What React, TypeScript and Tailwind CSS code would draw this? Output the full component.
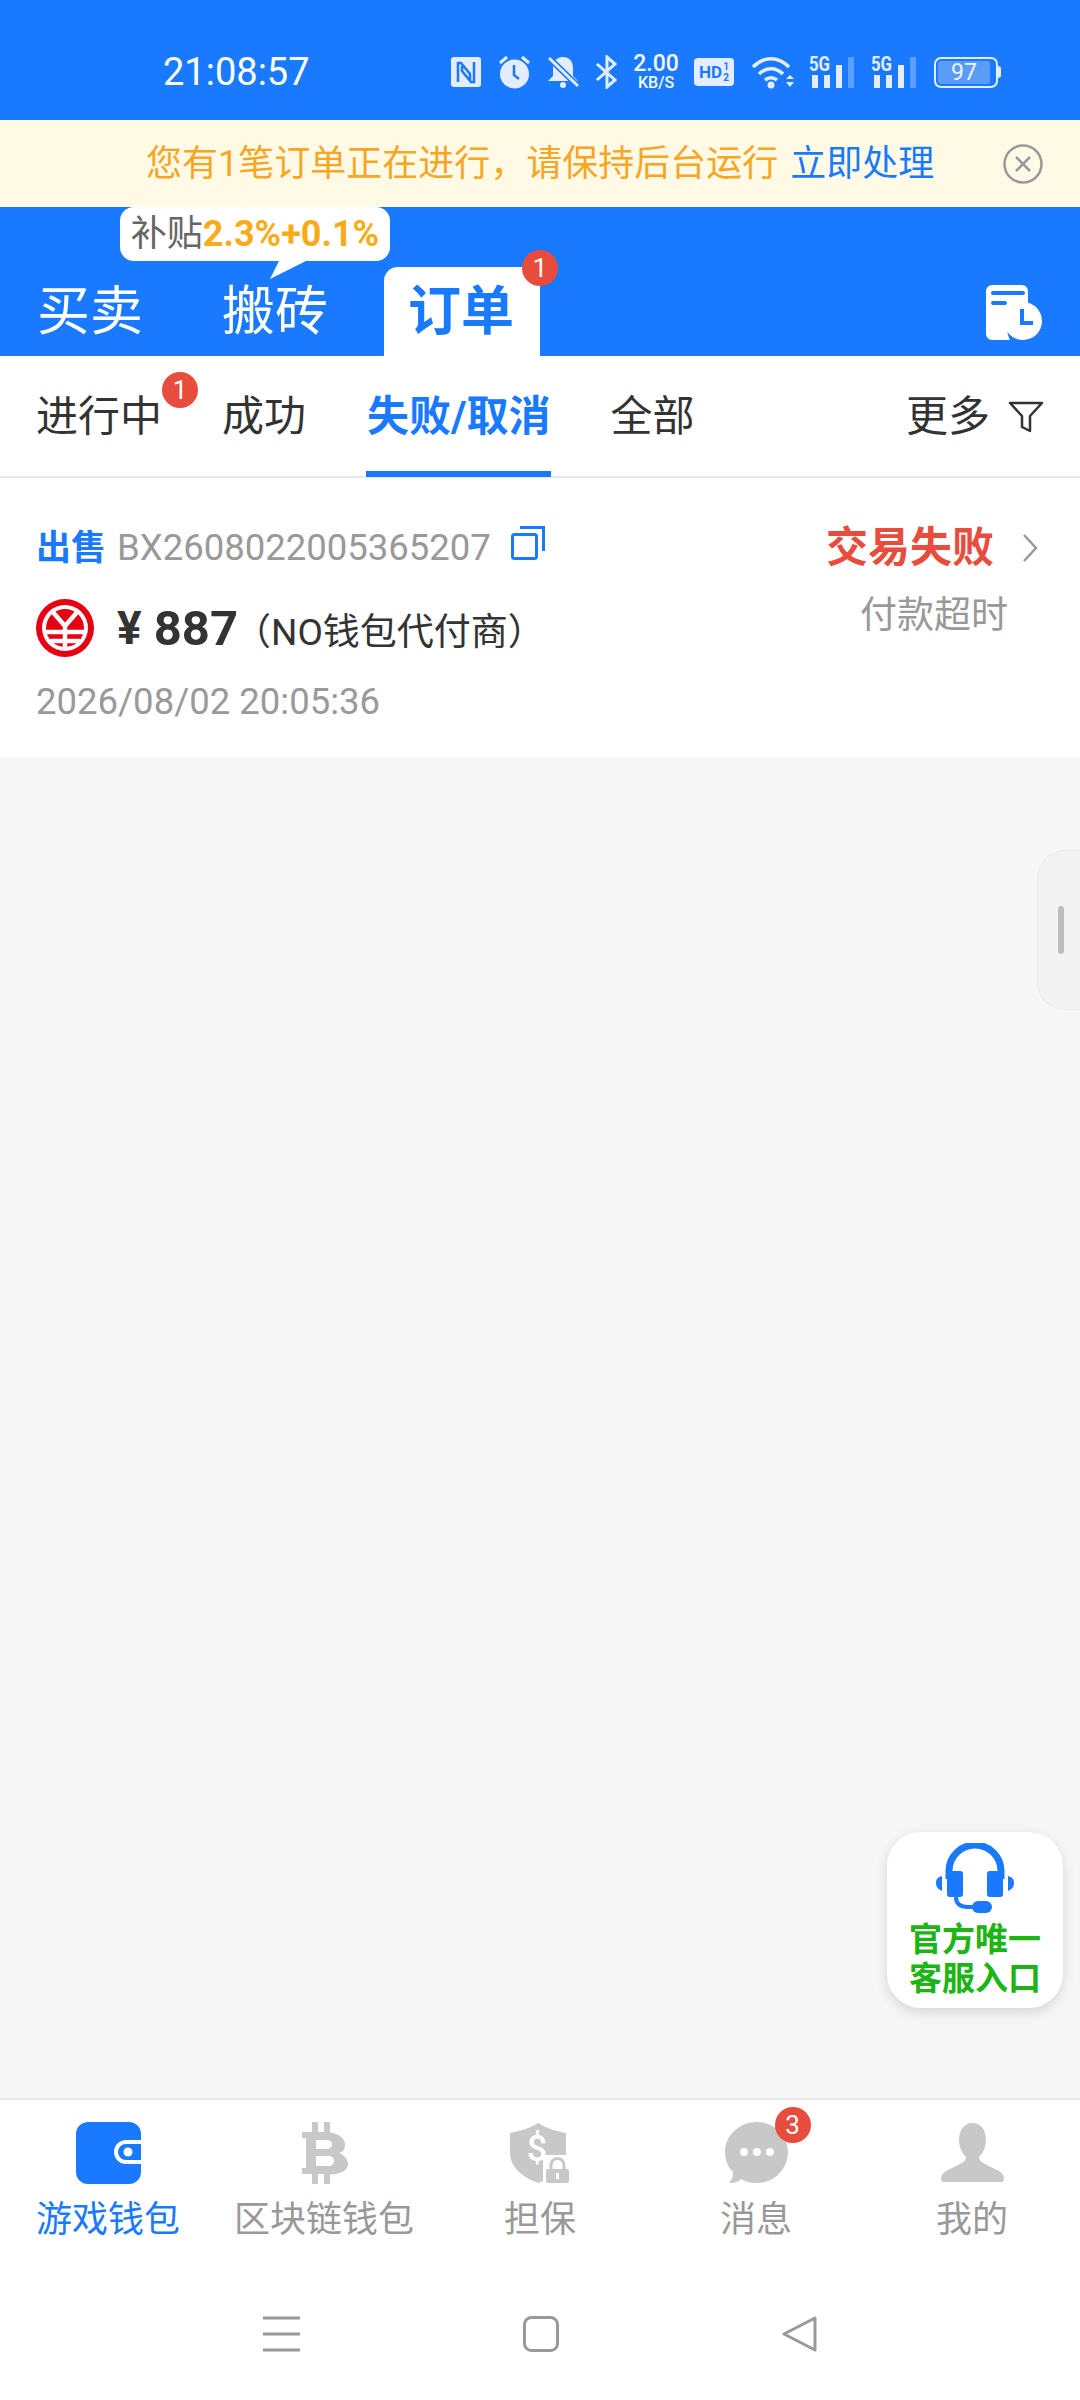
const cjk = "font-['Roboto','Noto_Sans_CJK_SC',sans-serif]";

function Badge({ n, className }: { n: string; className: string }) {
  return (
    <span className={`absolute flex h-[36px] w-[36px] items-center justify-center rounded-full bg-[#e84c3d] text-[26px] leading-none font-normal text-white ${className}`}>
      {n}
    </span>
  );
}

function Signal() {
  return (
    <svg width="47" height="38" viewBox="0 -6 47 38" className="mt-[-6px] shrink-0">
      <text x="0" y="15" fontSize="20" fontWeight="700" fontFamily="Roboto" fill="#e3edff" textLength="21" lengthAdjust="spacingAndGlyphs">5G</text>
      <rect x="3" y="19" width="6" height="13" fill="#e3edff" />
      <rect x="15" y="19" width="6" height="13" fill="#e3edff" />
      <rect x="27" y="9" width="6" height="23" fill="#e3edff" />
      <rect x="39" y="1" width="6" height="31" fill="#5a9fff" />
    </svg>
  );
}

function StatusBar() {
  return (
    <div className="flex h-[120px] items-center bg-[#1a7aff] pt-[24px] text-white">
      <span className="ml-[163px] w-[288px] text-[38px] leading-none">21:08:57</span>
      <svg width="30" height="30" viewBox="0 0 30 30" className="shrink-0">
        <rect width="30" height="30" rx="3" fill="#e3edff" />
        <path d="M7 25V6h3l9 11v6M23 5v20h-3l-9-11V9" fill="none" stroke="#1a7aff" strokeWidth="2.5" />
      </svg>
      <svg width="33" height="34" viewBox="0 0 33 34" className="ml-[17px] shrink-0">
        <circle cx="16.5" cy="19" r="14.5" fill="#e3edff" />
        <path d="M16 10v10l5 4" fill="none" stroke="#1a7aff" strokeWidth="2.5" />
        <path d="M2 8l7-6M31 8l-7-6" stroke="#e3edff" strokeWidth="3" />
      </svg>
      <svg width="32" height="34" viewBox="0 0 32 34" className="ml-[17px] shrink-0">
        <path d="M15 2c7 0 10 5 10 11v8l5 5H0l5-5v-8C5 7 8 2 15 2z" fill="#e3edff" />
        <circle cx="15" cy="30" r="3" fill="#e3edff" />
        <path d="M1 3l29 28" stroke="#1a7aff" strokeWidth="6" />
        <path d="M1 3l29 28" stroke="#e3edff" strokeWidth="3" />
      </svg>
      <svg width="22" height="34" viewBox="0 0 22 34" className="ml-[16px] shrink-0">
        <path d="M1 9l18 16-8 7V2l8 7L1 25" fill="none" stroke="#e3edff" strokeWidth="3" />
      </svg>
      <div className="ml-[12px] flex w-[52px] shrink-0 flex-col items-center font-['Roboto',sans-serif] font-medium text-[#f4f8ff]">
        <span className="text-[23px] leading-[20px]">2.00</span>
        <span className="mt-[2px] text-[16px] leading-[14px]">KB/S</span>
      </div>
      <span className="ml-[12px] flex h-[28px] w-[40px] shrink-0 items-center justify-center rounded-[4px] bg-[#e3edff] font-['Roboto',sans-serif] text-[17px] leading-none font-bold text-[#1a7aff]">
        HD<span className="ml-[1px] flex flex-col text-[10px] leading-[11px]"><span>1</span><span>2</span></span>
      </span>
      <svg width="44" height="34" viewBox="0 0 44 34" className="ml-[17px] shrink-0">
        <path d="M2 12c11-11 25-11 36 0M8 19c7-7 17-7 24 0M14 25c4-3 8-3 12 0" fill="none" stroke="#e3edff" strokeWidth="3.5" />
        <circle cx="20" cy="30" r="3.5" fill="#e3edff" />
        <path d="M35 24l4-4 4 4zM35 27l4 5 4-5z" fill="#e3edff" />
      </svg>
      <div className="ml-[14px] flex shrink-0 gap-[15px]">
        <Signal />
        <Signal />
      </div>
      <div className="ml-[16px] flex shrink-0 items-center">
        <span className="flex h-[31px] w-[64px] items-center rounded-[7px] border-[2px] border-[#e3edff] p-[2px]">
          <span className="flex h-full w-[52px] items-center justify-center rounded-[3px] bg-[#5a9bf5] text-[23px] leading-none text-[#eef4ff]">97</span>
        </span>
        <span className="h-[12px] w-[3px] rounded-r bg-[#e3edff]" />
      </div>
    </div>
  );
}

function Banner() {
  return (
    <div className={`flex h-[87px] items-center bg-[#fffae6] pl-[146px] text-[36px] leading-none ${cjk}`}>
      <span className="text-[#f6a623]">您有1笔订单正在进行，请保持后台运行</span>
      <span className="ml-[12px] text-[#1a7aff]">立即处理</span>
      <svg width="40" height="40" viewBox="0 0 40 40" className="ml-[69px]">
        <circle cx="20" cy="20" r="18.5" fill="none" stroke="#999" strokeWidth="2.5" />
        <path d="M13 13l14 14M27 13L13 27" stroke="#999" strokeWidth="2.5" />
      </svg>
    </div>
  );
}

function Header() {
  return (
    <div className={`relative flex h-[149px] items-end bg-[#1a7aff] pl-[37px] text-[53px] leading-none text-white ${cjk}`}>
      <span className="mb-[17px]">买卖</span>
      <span className="mb-[17px] ml-[79px]">搬砖</span>
      <div className="relative ml-[56px] flex h-[89px] w-[156px] items-center justify-center rounded-t-[14px] bg-white pt-[2px] pr-[2px] font-bold text-[#1a7aff]">
        订单
        <Badge n="1" className="top-[-17px] right-[-18px]" />
      </div>
      <svg width="58" height="58" viewBox="0 0 58 58" className="absolute top-[77px] left-[985px]">
        <path d="M7 1h30a6 6 0 0 1 6 6v18a21 21 0 0 0-18 31H7a6 6 0 0 1-6-6V7a6 6 0 0 1 6-6z" fill="#fff" />
        <path d="M8 9h30M8 19h12" stroke="#1a7aff" strokeWidth="4" strokeLinecap="round" />
        <circle cx="38" cy="37" r="19" fill="#fff" />
        <path d="M37 25v14h11" fill="none" stroke="#1a7aff" strokeWidth="4" />
      </svg>
      <div className="absolute top-0 left-[120px] flex h-[54px] w-[270px] items-center justify-center rounded-[14px] bg-white text-[36px]">
        <span className="text-[#666]">补贴</span>
        <span className="font-bold text-[#fbab18]">2.3%+0.1%</span>
        <svg width="40" height="20" viewBox="0 0 40 20" className="absolute top-[52px] left-[150px]">
          <path d="M0 20L10 0h30z" fill="#fff" />
        </svg>
      </div>
    </div>
  );
}

function SubTabs() {
  return (
    <div className={`flex h-[122px] items-center border-b-[2px] border-[#e8e8e8] bg-white pt-[2px] pl-[36px] text-[42px] leading-none text-[#333] ${cjk}`}>
      <span className="relative w-[126px]">
        进行中
        <Badge n="1" className="top-[-24px] right-[-36px]" />
      </span>
      <span className="ml-[60px]">成功</span>
      <span className="relative ml-[61px] font-bold text-[#1a7aff]">
        失败/取消
        <span className="absolute right-0 bottom-[-39px] left-[-1px] h-[6px] bg-[#1a7aff]" />
      </span>
      <span className="ml-[60px]">全部</span>
      <span className="ml-auto">更多</span>
      <svg width="36" height="32" viewBox="0 0 36 32" className="mr-[36px] ml-[18px]">
        <path d="M2 2h32L22 15v15l-8-4V15z" fill="none" stroke="#333" strokeWidth="2.5" strokeLinejoin="round" />
      </svg>
    </div>
  );
}

function CnyIcon() {
  return (
    <svg width="58" height="58" viewBox="0 0 58 58" className="shrink-0">
      <circle cx="29" cy="29" r="29" fill="#e60012" />
      <circle cx="29" cy="29" r="23" fill="#fff" />
      <circle cx="29" cy="29" r="19" fill="#e60012" />
      <path d="M15 11l14 16 14-16M29 27v23M9 33h40M14 42h30" fill="none" stroke="#fff" strokeWidth="4.5" />
    </svg>
  );
}

function OrderCard() {
  return (
    <div className={`flex h-[279px] justify-between bg-white pt-[50px] pr-[41px] pl-[36px] ${cjk}`}>
      <div>
        <div className="flex h-[40px] items-center">
          <span className="text-[35px] leading-none font-bold text-[#1a7aff]">出售</span>
          <span className="ml-[11px] text-[36.5px] leading-none text-[#999]">BX2608022005365207</span>
          <svg width="34" height="34" viewBox="0 0 34 34" className="mt-[-10px] ml-[20px]">
            <rect x="1.5" y="8.5" width="24" height="24" rx="2" fill="none" stroke="#1a7aff" strokeWidth="3" />
            <path d="M9 1.5h23.5V25" fill="none" stroke="#1a7aff" strokeWidth="3" />
          </svg>
        </div>
        <div className="mt-[31px] flex h-[58px] items-center">
          <CnyIcon />
          <span className="ml-[23px] text-[46px] leading-none font-bold text-[#333]">¥</span>
          <span className="ml-[12px] text-[49px] leading-none font-bold text-[#333]">887</span>
          <span className="mt-[8px] ml-[-4px] text-[37px] leading-none text-[#333]">（NO钱包代付商）</span>
        </div>
        <div className="mt-[27px] text-[36.5px] leading-none text-[#999]">2026/08/02 20:05:36</div>
      </div>
      <div className="flex flex-col items-end">
        <div className="flex h-[40px] items-center">
          <span className="text-[42px] leading-none font-bold text-[#e74c3c]">交易失败</span>
          <svg width="18" height="30" viewBox="0 0 18 30" className="ml-[27px]">
            <path d="M3 2l12 13L3 28" fill="none" stroke="#999" strokeWidth="2.5" />
          </svg>
        </div>
        <span className="mt-[29px] mr-[31px] text-[37px] leading-none text-[#999]">付款超时</span>
      </div>
    </div>
  );
}

function WalletIcon() {
  return (
    <svg width="65" height="62" viewBox="0 0 65 62">
      <rect width="65" height="62" rx="12" fill="#1a7aff" />
      <path d="M65 20H50a10 10 0 0 0 0 20h15" fill="#1a7aff" stroke="#fff" strokeWidth="4" />
      <circle cx="52" cy="30" r="4.5" fill="#fff" />
    </svg>
  );
}

function BitcoinIcon() {
  return (
    <svg width="48" height="62" viewBox="0 0 48 62">
      <path
        fillRule="evenodd"
        fill="#c8c8c8"
        d="M2 10H12V0H18V10H24V0H30V10.5C40 12 45 17 45 23C45 27 43 30 39 31C44 33 48 37 48 42C48 48 42 52 30 52.5V62H24V52H18V62H12V52H2V46H6V16H2ZM16 18V27H26C30 27 32 25 32 22.5C32 20 30 18 26 18ZM16 34V44H28C32 44 34 42 34 39C34 36 32 34 28 34Z"
      />
    </svg>
  );
}

function ShieldIcon() {
  return (
    <svg width="60" height="60" viewBox="0 0 60 60">
      <path d="M28 0c8 5 17 8 28 10v20c0 13-10 23-28 30C10 53 0 43 0 30V10c11-2 20-5 28-10z" fill="#c8c8c8" />
      <text x="27" y="38" textAnchor="middle" fontSize="36" fontWeight="500" fontFamily="Roboto" fill="#fff">$</text>
      <rect x="33" y="32" width="27" height="28" rx="4" fill="#fff" />
      <rect x="36" y="46" width="23" height="14" rx="2" fill="#c8c8c8" />
      <path d="M41 46v-4a6.5 6.5 0 0 1 13 0v4" fill="none" stroke="#c8c8c8" strokeWidth="3" />
      <rect x="46" y="50" width="3" height="6" fill="#fff" />
    </svg>
  );
}

function ChatIcon() {
  return (
    <svg width="63" height="62" viewBox="0 0 63 62">
      <path d="M32 0c17 0 31 13 31 30S49 61 32 61c-6 0-11-1-16-4-3 3-7 4-12 4 3-3 4-7 4-11C3 45 0 38 0 30 0 13 15 0 32 0z" fill="#c8c8c8" />
      <circle cx="19" cy="30" r="4" fill="#fff" />
      <circle cx="32" cy="30" r="4" fill="#fff" />
      <circle cx="45" cy="30" r="4" fill="#fff" />
    </svg>
  );
}

function PersonIcon() {
  return (
    <svg width="63" height="60" viewBox="0 0 63 60">
      <path d="M31.5 0C40 0 45 7 45 17C45 25 41 31 38 34C38 37 40 39 44 41L58 48C61 50 63 52 63 56C63 58 62 59 60 59H3C1 59 0 58 0 56C0 52 2 50 5 48L19 41C23 39 25 37 25 34C22 31 18 25 18 17C18 7 23 0 31.5 0Z" fill="#c8c8c8" />
    </svg>
  );
}

const tabs = [
  { label: "游戏钱包", icon: <WalletIcon />, active: true },
  { label: "区块链钱包", icon: <BitcoinIcon /> },
  { label: "担保", icon: <ShieldIcon /> },
  { label: "消息", icon: <ChatIcon />, badge: "3" },
  { label: "我的", icon: <PersonIcon /> },
];

function BottomNav() {
  return (
    <div className={`h-[302px] border-t-[2px] border-[#e8e8e8] bg-white ${cjk}`}>
      <div className="grid grid-cols-5 pt-[22px]">
        {tabs.map((tab) => (
          <div key={tab.label} className="flex flex-col items-center">
            <div className="relative flex h-[62px] items-center justify-center">
              {tab.icon}
              {tab.badge && <Badge n={tab.badge} className="top-[-15px] right-[-23px]" />}
            </div>
            <span className={`mt-[18px] text-[36px] leading-none ${tab.active ? "text-[#1a7aff]" : "text-[#999]"}`}>
              {tab.label}
            </span>
          </div>
        ))}
      </div>
      <div className="mt-[78px] flex items-center justify-center gap-[223px]">
        <svg width="37" height="36" viewBox="0 0 37 36">
          <path d="M0 2h37M0 18h37M0 34h37" stroke="#999" strokeWidth="3" />
        </svg>
        <svg width="36" height="36" viewBox="0 0 36 36">
          <rect x="1.5" y="1.5" width="33" height="33" rx="7" fill="none" stroke="#999" strokeWidth="3" />
        </svg>
        <svg width="36" height="36" viewBox="0 0 36 36">
          <path d="M33 2v32L2 18z" fill="none" stroke="#999" strokeWidth="3" strokeLinejoin="round" />
        </svg>
      </div>
    </div>
  );
}

function ServiceButton() {
  return (
    <div className={`absolute top-[1832px] left-[887px] flex h-[176px] w-[176px] flex-col items-center rounded-[34px] bg-white pt-[11px] shadow-[0_4px_14px_rgba(0,0,0,0.14)] ${cjk}`}>
      <svg width="78" height="72" viewBox="0 0 78 72">
        <path d="M13 36V28a26 26 0 0 1 52 0v8" fill="none" stroke="#1a7aff" strokeWidth="7" />
        <rect x="11" y="28" width="16" height="26" rx="3" fill="#1a7aff" />
        <rect x="51" y="28" width="16" height="26" rx="3" fill="#1a7aff" />
        <path d="M6 33v15C2 46 0 44 0 40s2-6 6-7zM72 33v15c4-2 6-4 6-8s-2-6-6-7z" fill="#1a7aff" />
        <path d="M20 54c0 7 4 10 12 10h8" fill="none" stroke="#1a7aff" strokeWidth="4" />
        <rect x="36" y="58" width="20" height="12" rx="6" fill="#1a7aff" />
      </svg>
      <div className="mt-[5px] text-center text-[33px] leading-[39px] font-bold whitespace-nowrap text-[#1cb514]">
        官方唯一
        <br />
        客服入口
      </div>
    </div>
  );
}

function SideHandle() {
  return (
    <div className="absolute top-[850px] left-[1037px] flex h-[160px] w-[43px] items-center rounded-l-[28px] border border-r-0 border-[#ebebeb] bg-[#f3f3f3] pl-[20px]">
      <span className="h-[48px] w-[6px] rounded-full bg-[#bdbdbd]" />
    </div>
  );
}

export default function App() {
  return (
    <div className="relative flex h-[2400px] w-[1080px] flex-col overflow-hidden bg-[#f7f7f7] font-['Roboto',sans-serif]">
      <StatusBar />
      <Banner />
      <Header />
      <SubTabs />
      <OrderCard />
      <div className="flex-1" />
      <BottomNav />
      <SideHandle />
      <ServiceButton />
    </div>
  );
}
